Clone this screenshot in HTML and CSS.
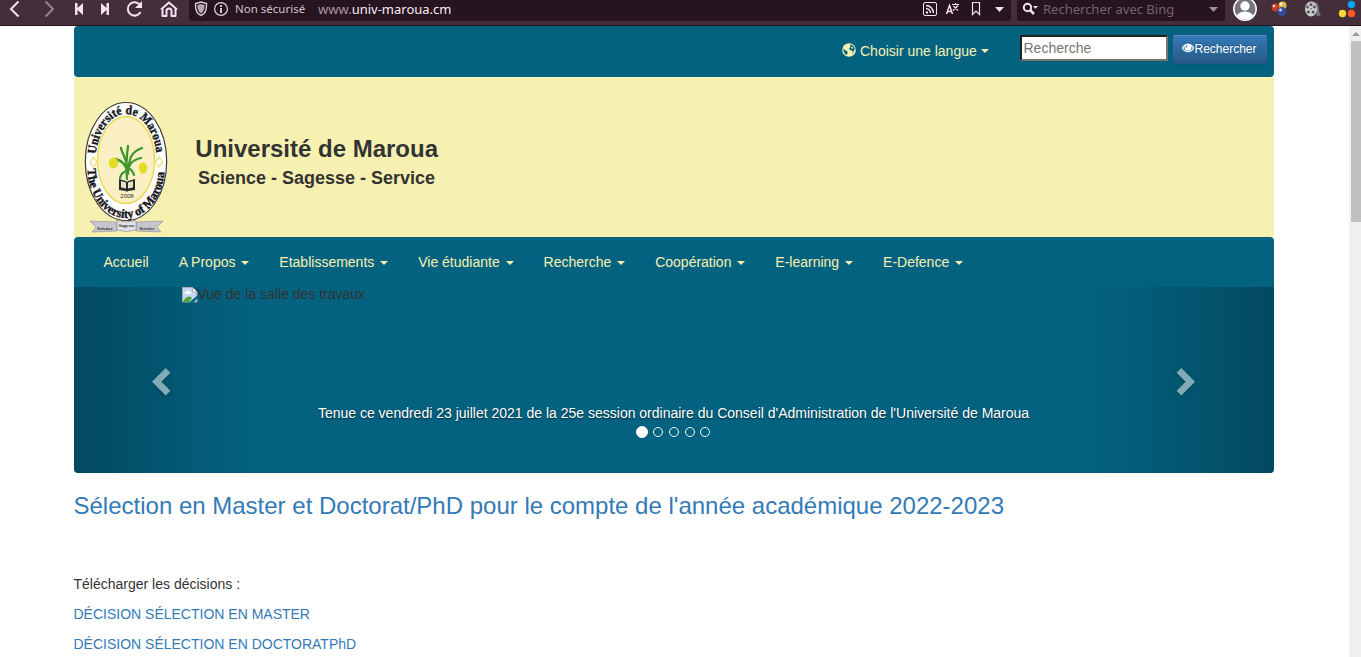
FILE: index.html
```html
<!DOCTYPE html>
<html lang="fr">
<head>
<meta charset="utf-8">
<title>Université de Maroua</title>
<link rel="stylesheet" href="styles.css">
</head>
<body>
<div class="toolbar">
  <svg class="ico" width="26" height="25" viewBox="0 0 26 25"><path d="M18.5 1.5 11 9l7.500 7.500" fill="none" stroke="#f6dff3" stroke-width="2"/></svg>
  <svg class="ico" width="34" height="25" viewBox="26 0 34 25"><path d="M45.500 1.500 53 9l-7.500 7.500" fill="none" stroke="#95848f" stroke-width="2"/></svg>
  <svg class="ico" width="30" height="25" viewBox="65 0 30 25"><path d="M75 3h2.500v5l5.500-5v12l-5.500-5v5H75z" fill="#f6dff3"/></svg>
  <svg class="ico" width="25" height="25" viewBox="95 0 25 25"><path d="M109 3h-2.500v5L101 3v12l5.500-5v5h2.500z" fill="#f6dff3"/></svg>
  <svg class="ico" width="30" height="25" viewBox="120 0 30 25"><path d="M140 5a6.700 6.700 0 1 0 .5 7" fill="none" stroke="#f6dff3" stroke-width="2"/><path d="M142 1v7h-7z" fill="#f6dff3"/></svg>
  <svg class="ico" width="39" height="25" viewBox="150 0 39 25"><path d="m161 9.500 8-7 8 7M162.500 8.500V16h4v-5a2.500 2.500 0 0 1 5 0v5h4V8.500" fill="none" stroke="#f6dff3" stroke-width="2" stroke-linejoin="round"/></svg>
  <div class="address">
    <svg width="14" height="16" viewBox="0 0 14 16"><path d="M7 1l5.500 1.500C12.800 8 11 13 7 14.500 3 13 1.200 8 1.500 2.500z" fill="none" stroke="#dcc9d8" stroke-width="1.400"/><path d="M7 3l3.600 1C10.700 8 9.500 11 7 12.500 4.500 11 3.300 8 3.400 4z" fill="#b7a5b3"/></svg>
    <svg class="info" width="16" height="16" viewBox="0 0 16 16"><circle cx="8" cy="8" r="6.400" fill="none" stroke="#e7d2e3" stroke-width="1.200"/><path d="M8 7v5M8 4v2" stroke="#e7d2e3" stroke-width="1.800"/></svg>
    <span class="insecure">Non sécurisé</span>
    <span class="url"><i>www.</i>univ-maroua.cm</span>
    <svg class="tools" width="92" height="20" viewBox="920 0 92 20" fill="none" stroke="#f6dff3">
      <rect x="923.500" y="2.500" width="13" height="13" rx="1.500"/><circle cx="927" cy="12.500" r="1.200" fill="#f6dff3" stroke="none"/><path d="M926 8.500a4.500 4.500 0 0 1 4.500 4.500M926 5.500a7.500 7.500 0 0 1 7.500 7.500" stroke-width="1.400"/>
      <path d="m946.500 14 3-8.500 3 8.500m-5-2.500h4" stroke-width="1.500"/><path d="M952 4.500h7M955.500 3v1.500M953.500 6l4.500 4.500M958 5.500l-5 5" stroke-width="1.200"/>
      <path d="M972.500 2.500h7v12l-3.500-3.500-3.500 3.500z" stroke-width="1.200"/><path d="M995 7h9l-4.500 5z" fill="#f6dff3" stroke="none"/>
    </svg>
  </div>
  <div class="bing">
    <svg width="18" height="20" viewBox="0 0 18 20"><circle cx="5.500" cy="7.500" r="3.700" fill="none" stroke="#f6dff3" stroke-width="2"/><path d="m8 10 4 4" stroke="#f6dff3" stroke-width="2.500"/><path d="M11 6h5l-2.500 2.800z" fill="#f6dff3"/></svg>
    <span>Rechercher avec Bing</span>
    <svg class="drop" width="10" height="6" viewBox="0 0 10 6"><path d="M0 0h9L4.500 5z" fill="#a18b9c"/></svg>
  </div>
  <svg class="extensions" width="136" height="25" viewBox="1225 0 136 25">
    <defs><clipPath id="av"><circle cx="1245" cy="9" r="10.500"/></clipPath></defs>
    <circle cx="1245" cy="9" r="11.200" fill="#77747a" stroke="#fff" stroke-width="1.500"/><g clip-path="url(#av)" fill="#fff"><circle cx="1245" cy="6" r="4.700"/><ellipse cx="1245" cy="18" rx="9" ry="6.500"/></g>
    <circle cx="1282.500" cy="5.500" r="4" fill="#dfb647"/><circle cx="1275.500" cy="7.500" r="4" fill="#c53a28"/><circle cx="1282" cy="11.500" r="4.500" fill="#304f9b"/><circle cx="1281" cy="4" r="1.400" fill="#fff3cf"/><circle cx="1274" cy="6" r="1.300" fill="#f8d8ce"/><circle cx="1280.500" cy="10" r="1.400" fill="#d4def5"/>
    <path d="M1312 1.500c5 0 7 3 7 7.500 0 3 .5 4.500 2 6l-4 1.500z" fill="#77787a"/><ellipse cx="1311" cy="9" rx="6" ry="7.500" fill="#c9cbc9"/><g fill="#55565a"><circle cx="1311" cy="4.500" r="1.500"/><circle cx="1307.500" cy="7" r="1.400"/><circle cx="1314.300" cy="7" r="1.400"/><circle cx="1308.300" cy="12" r="1.500"/><circle cx="1313.200" cy="12" r="1.500"/><circle cx="1311" cy="8.700" r=".8"/></g>
    <circle cx="1351.500" cy="4.500" r="3.700" fill="#00a4f5"/><circle cx="1342.500" cy="13.500" r="3.700" fill="#ffd535"/><circle cx="1351.500" cy="13.500" r="3.700" fill="#ff5a25"/>
  </svg>
</div>
<div class="viewport">
  <div class="page">
    <div class="topbar">
      <a class="lang"><svg width="14" height="14" viewBox="0 0 14 14"><circle cx="7" cy="7" r="6.800" fill="#f7f1b1"/><path d="M8 1.500C11 1.700 12.600 4 12.700 6.500L11 9 9.500 7.500 8 7.200 7 5.500 8.500 4zM1.500 5.500l2 2 2 .7v2L4.700 12C2.500 11 1 8.500 1.500 5.500zM10.500 9.800l1.500-.7-1.700 2.500z" fill="#036280"/><path d="M9.500 3.500l1.500 1-.5 1.500-1.500-.8z" fill="#f7f1b1"/></svg><span>Choisir une langue</span><b class="caret"></b></a>
      <input class="query" type="text" placeholder="Recherche">
      <button class="go"><svg width="12" height="12" viewBox="0 0 12 12"><path d="M.4 6C3.200 1.100 8.800 1.100 11.600 6 8.800 10.900 3.200 10.900.4 6z" fill="none" stroke="#fff" stroke-width="1.300"/><circle cx="6" cy="5.200" r="3.500" fill="#fff"/><path d="M4 5.500A2 2 0 0 1 5.500 3.500" stroke="#2d6ca4" stroke-width="1.100" fill="none"/></svg>Rechercher</button>
    </div>
    <header class="banner">
      <svg class="logo" width="84" height="134" viewBox="84 100 84 134">
        <defs>
          <path id="arcTop" d="M96 154A30.500 46 0 0 1 156.500 154"/>
          <path id="arcBottom" d="M87.500 168A38.500 50 0 0 0 164.500 168"/>
        </defs>
        <ellipse cx="126" cy="161.500" rx="40.700" ry="59" fill="#fff" stroke="#3a3a38" stroke-width="1.200"/>
        <ellipse cx="126" cy="160" rx="28.500" ry="43.500" fill="#fbf0c4" stroke="#eed957" stroke-width="1.500"/>
        <path d="m93.500 157 3.500 5-3.500 5-3.500-5zM159 157l3.500 5-3.500 5-3.500-5z" fill="#fff" stroke="#f3df7c" stroke-width="1.300"/>
        <text class="seal"><textPath href="#arcTop" textLength="108" lengthAdjust="spacingAndGlyphs">Université de Maroua</textPath></text>
        <text class="seal"><textPath href="#arcBottom" startOffset="1" textLength="134" lengthAdjust="spacingAndGlyphs">The University of Maroua</textPath></text>
        <path d="M127 179c-1-12-1-20 1-33M127 172c-1-9-6-12-13-13M128 174c0-10 4-14 13-16M127 166c-1-9-5-12-6-18M129 165c1-10 5-14 13-17M126 171c-3 1-5 3-6 7M128 168c4 1 5 4 6 7" fill="none" stroke="#3d972d" stroke-width="2.300" stroke-linecap="round"/>
        <ellipse cx="113.500" cy="163" rx="4.800" ry="5.300" fill="#e3dc26"/><ellipse cx="143" cy="168" rx="4.300" ry="5.700" fill="#e3dc26"/>
        <path d="M119 179l7 2 1 1 1-1 7-2v11l-7 1-1 1-1-1-7-1z" fill="#282c28"/><path d="M121 181l5 1.500v6l-5-1zM133 181l-5 1.500v6l5-1z" fill="#e5e2c5"/>
        <text class="year" x="127" y="198">2008</text>
        <path d="M90 221l27 1v9l-25 1 4-5zM163 221l-27 1v9l25 1-4-5z" fill="#c5c6cb" stroke="#8c8c92" stroke-width=".6"/><path d="M117 220.500q9 3 19 0v9.500q-10 3-19 0z" fill="#e1e1e5" stroke="#85858b" stroke-width=".6"/>
        <text class="ribbon" x="105" y="230">Science</text><text class="ribbon" x="126.500" y="227">Sagesse</text><text class="ribbon" x="147" y="230">Service</text>
      </svg>
      <div class="titles"><h1>Université de Maroua</h1><h2>Science - Sagesse - Service</h2></div>
    </header>
    <nav class="menu">
      <a>Accueil</a><a>A Propos<b class="caret"></b></a><a>Etablissements<b class="caret"></b></a><a>Vie étudiante<b class="caret"></b></a><a>Recherche<b class="caret"></b></a><a>Coopération<b class="caret"></b></a><a>E-learning<b class="caret"></b></a><a>E-Defence<b class="caret"></b></a>
    </nav>
    <section class="carousel">
      <div class="side left"><svg width="20" height="28" viewBox="0 0 20 28"><path d="M14.700 0 1 13.700 14.700 27.400l4.700-4.700-9-9 9-9z" fill="#fff"/></svg></div>
      <div class="slide">
        <div class="missing"><svg width="16" height="16" viewBox="0 0 16 16"><path d="M.5.500h10L15 5v10H.5z" fill="#c3d8f5" stroke="#a6aaae"/><path d="M1 14.500Q6 7 10 11l-3 4H1z" fill="#4aa537"/><path d="M3 6q0-2 2-2 2-2 3 1 2 0 1 2H3z" fill="#fff"/><path d="M10.500.5V5H15" fill="#fff" stroke="#a6aaae"/><path d="M7 15.500 16 8v3l-5 5z" fill="#036280"/></svg><span>Vue de la salle des travaux</span></div>
        <p class="caption">Tenue ce vendredi 23 juillet 2021 de la 25e session ordinaire du Conseil d'Administration de l'Université de Maroua</p>
        <div class="dots"><i class="on"></i><i></i><i></i><i></i><i></i></div>
      </div>
      <div class="side right"><svg width="20" height="28" viewBox="0 0 20 28"><path d="M5.300 0 19 13.700 5.300 27.400.6 22.700l9-9-9-9z" fill="#fff"/></svg></div>
    </section>
    <main>
      <h3>Sélection en Master et Doctorat/PhD pour le compte de l'année académique 2022-2023</h3>
      <p>Télécharger les décisions :</p>
      <p><a>DÉCISION SÉLECTION EN MASTER</a></p>
      <p><a>DÉCISION SÉLECTION EN DOCTORATPhD</a></p>
    </main>
  </div>
  <div class="scrollbar"><i class="up"></i><div class="thumb"></div></div>
</div>
</body>
</html>
```
FILE: styles.css
```css
* { box-sizing: border-box; }
body { margin: 0; height: 657px; overflow: hidden; background: #fff; color: #333; font: 14px/20px "Liberation Sans", Arial, sans-serif; }
svg { display: block; flex: none; }
h1, h2, h3, p { margin: 0; }

.toolbar { display: flex; height: 26px; background: #432e39; border-bottom: 1px solid #24131d; }
.toolbar .ico:nth-child(2) { margin-right: 5px; }
.address, .bing { display: flex; align-items: flex-start; height: 21px; background: #26141e; border-radius: 0 0 3px 3px; font-family: "Noto Sans", sans-serif; white-space: nowrap; }
.address { width: 822px; padding-left: 5px; }
.address > svg { margin-top: 1px; }
.address .info { margin-left: 5px; }
.insecure { margin-left: 6px; color: #d5c0d1; font-size: 11.5px; line-height: 18px; width: 83px; }
.url { color: #fbeaf9; font-size: 13px; line-height: 18px; }
.url i { color: #ac96a7; font-style: normal; }
.address .tools { margin: 0 0 0 auto; margin-right: -1px; }
.bing { width: 208px; margin-left: 6px; padding-left: 5px; color: #76636f; font-size: 13px; line-height: 18px; }
.bing span { margin-left: 3px; }
.bing .drop { margin: 7px 6px 0 auto; }

.viewport { display: flex; height: 631px; }
.page { width: 1200px; margin-left: 73.5px; flex: none; }
.scrollbar { width: 12px; margin-left: auto; padding: 6px 0 0 2px; background: #f0f0f0; }
.up { display: block; width: 0; margin-left: 1px; border: 4px solid transparent; border-top: 0; border-bottom: 4px solid #999; }
.thumb { height: 181px; margin-top: 5px; background: #c1c1c1; }

.topbar { display: flex; align-items: flex-start; height: 51px; border-radius: 4px; background: #036280; }
.lang { display: flex; align-items: center; width: 178px; margin-left: 768.5px; padding-top: 15px; color: #f7f1b1; }
.lang svg { margin-top: -2px; }
.lang span { margin-left: 4px; }
.caret { display: inline-block; width: 0; margin-left: 4px; vertical-align: middle; border: 4px solid transparent; border-top: 4px solid #f7f1b1; border-bottom: 0; }
.query { width: 148px; height: 26px; margin: 9px 4px 0 0; padding: 1px 1px 1px 1.5px; border: 2px inset #767676; font: 14px/20px "Liberation Sans", Arial, sans-serif; }
.query::placeholder { color: #757575; }
.go { display: flex; align-items: center; justify-content: center; width: 96px; height: 30px; margin: 8px 0 0 -.5px; padding: 0 0 1px; border: 1px solid #245580; border-radius: 3px; background: linear-gradient(#337ab7, #265a88); box-shadow: inset 0 1px 0 rgba(255,255,255,.15), 0 1px 1px rgba(0,0,0,.08); color: #fff; font: 12px/18px "Liberation Sans", Arial, sans-serif; text-shadow: 0 -1px 0 rgba(0,0,0,.2); }
.go svg { margin-top: -1px; }

.banner { display: flex; height: 160px; background: #f7f1b1; }
.logo { margin: 23px 0 0 10.5px; }
.seal { font: bold 12.5px "Liberation Serif", serif; fill: #17171c; stroke: #17171c; stroke-width: .4px; }
.year { font: 6px "Liberation Sans", sans-serif; fill: #333; text-anchor: middle; }
.ribbon { font: bold 5px "Liberation Serif", serif; fill: #28282d; text-anchor: middle; }
.titles { padding: 58px 0 0 27.3px; }
.titles h1 { font-size: 24px; line-height: 28px; }
.titles h2 { margin: 5px 0 0 2.700px; font-size: 18px; line-height: 20px; }

.menu { display: flex; height: 50px; padding-left: 15px; border-radius: 4px 4px 0 0; background: #036280; }
.menu a { padding: 15px; color: #f7f1b1; white-space: nowrap; }
.menu .caret { margin-left: 5.9px; }

.carousel { display: flex; height: 186px; border-radius: 0 0 4px 4px; background: #036280; overflow: hidden; }
.side { width: 180px; flex: none; padding-top: 80.5px; }
.side svg { opacity: .5; filter: drop-shadow(0 1px 2px rgba(0,0,0,.4)); }
.left { padding-left: 77.5px; background: linear-gradient(to right, rgba(0,0,0,.25), transparent); }
.right { padding-left: 82.5px; background: linear-gradient(to left, rgba(0,0,0,.25), transparent); }
.slide { width: 840px; }
.missing { display: flex; height: 16px; margin-left: -72px; line-height: 15px; }
.caption { margin-top: 100px; color: #fff; text-align: center; text-shadow: 0 1px 2px rgba(0,0,0,.6); white-space: nowrap; }
.dots { display: flex; align-items: center; justify-content: center; gap: 5.6px; height: 12px; margin: 3px 1px 0 0; }
.dots i { width: 10px; height: 10px; border: 1px solid #fff; border-radius: 50%; }
.dots .on { width: 12px; height: 12px; background: #fff; }

main h3 { margin: 20px 0 55px; color: #337ab7; font-size: 24px; line-height: 26px; font-weight: 400; }
main p { margin-bottom: 10px; }
main a { color: #337ab7; }
```
